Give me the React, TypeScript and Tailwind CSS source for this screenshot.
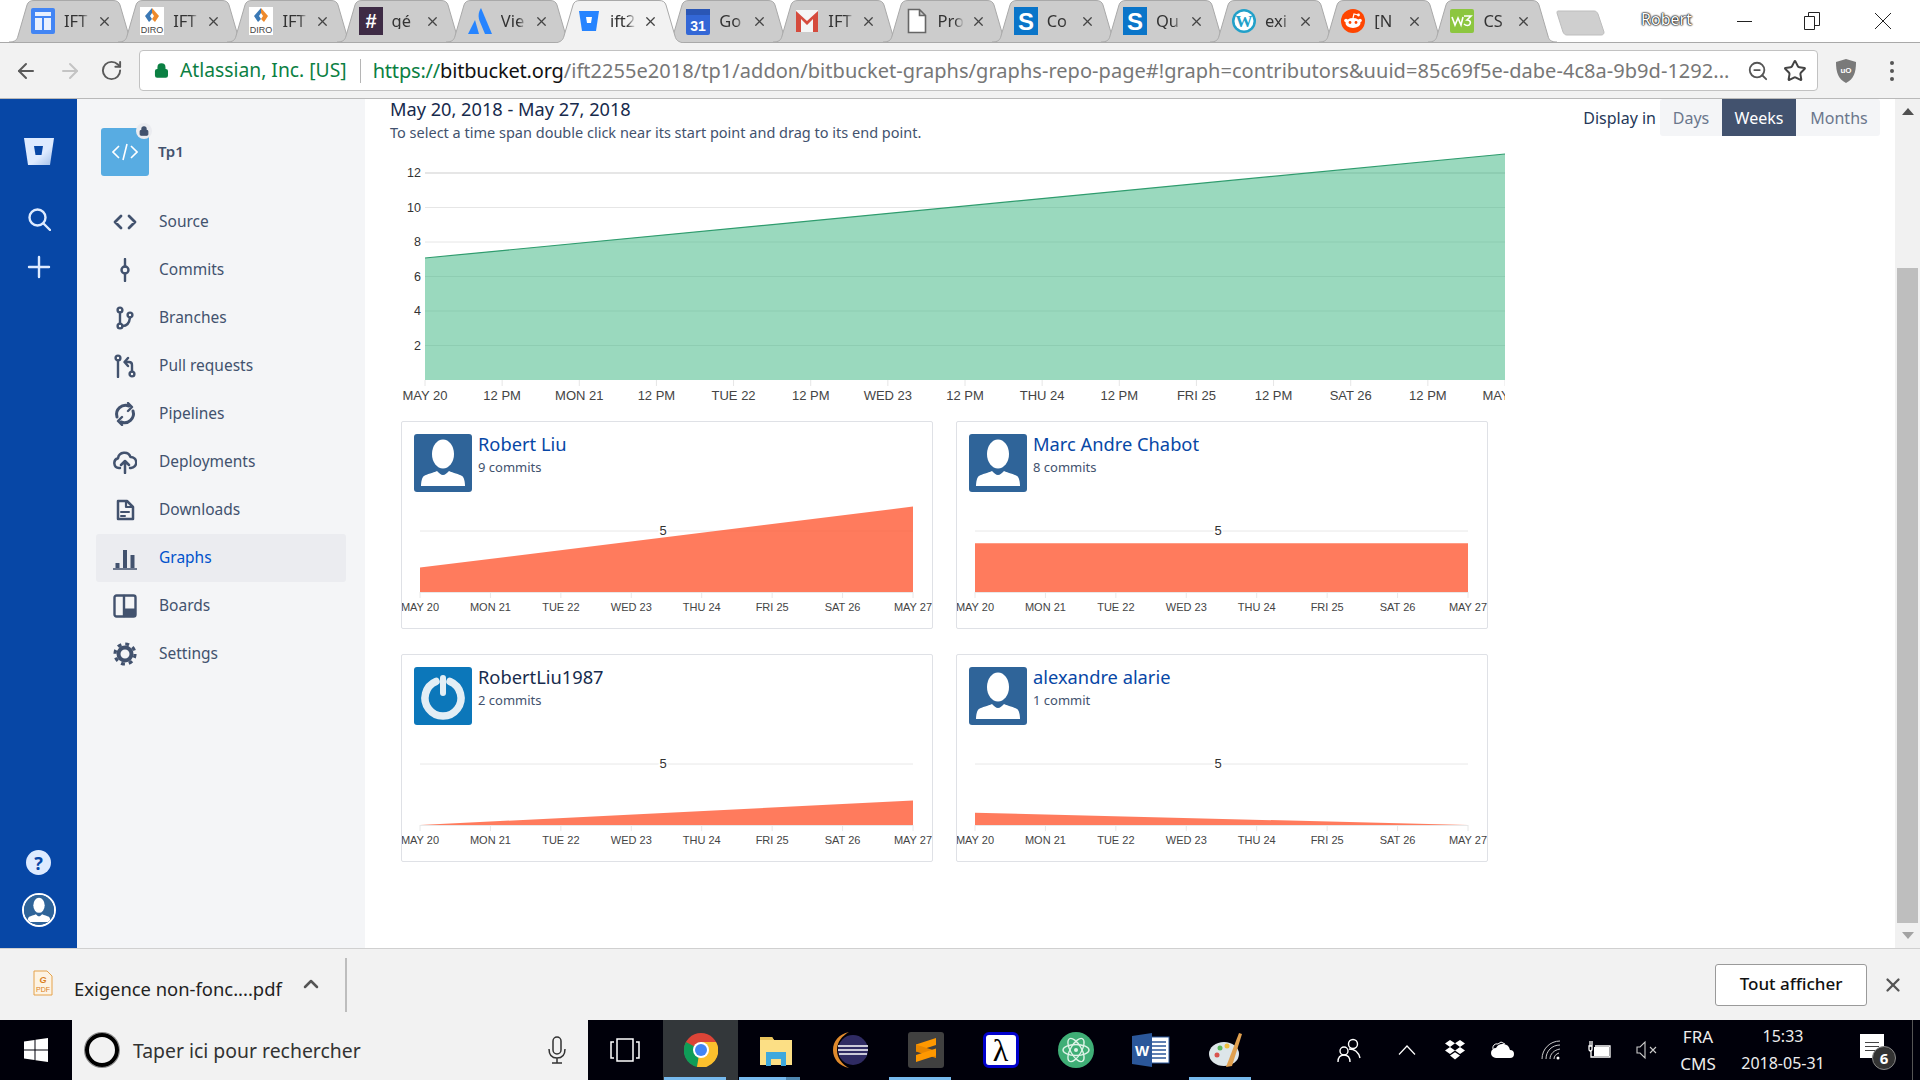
import type { ReactNode } from 'react';
import { ArrowLeft, ArrowRight, RotateCw, Lock, Star, ZoomOut, ChevronUp, X } from 'lucide-react';

const tabs: { text: string; icon: ReactNode; active?: boolean }[] = [
  { text: 'IFT', icon: <SitesIcon /> },
  { text: 'IFT', icon: <DiroIcon /> },
  { text: 'IFT', icon: <DiroIcon /> },
  { text: 'gé', icon: <SlackIcon /> },
  { text: 'Vie', icon: <AtlassianIcon /> },
  { text: 'ift2', icon: <BucketFavicon />, active: true },
  { text: 'Go', icon: <CalendarIcon /> },
  { text: 'IFT', icon: <GmailIcon /> },
  { text: 'Pro', icon: <DocIcon /> },
  { text: 'Co', icon: <StackIcon /> },
  { text: 'Qu', icon: <StackIcon /> },
  { text: 'exi', icon: <WordpressIcon /> },
  { text: '[N', icon: <RedditIcon /> },
  { text: 'CS', icon: <W3Icon /> },
];

function SitesIcon() {
  return (
    <svg width="24" height="26" viewBox="0 0 24 26">
      <rect width="24" height="26" rx="2" fill="#4285f4" />
      <path d="M4 4h16v4H4zM4 10h7v12H4zM13 10h7v12h-7z" fill="#e8f0fe" />
    </svg>
  );
}

function DiroIcon() {
  return (
    <svg width="24" height="28" viewBox="0 0 24 28">
      <rect width="24" height="28" fill="#fff" />
      <path d="M12 1 5 9l4 6 3-3-2-3 2-3z" fill="#3a78b5" />
      <path d="M12 1l7 8-4 6-3-3 2-3-2-3z" fill="#ee8a2c" />
      <text x="12" y="26" textAnchor="middle" fontSize="9" fontFamily="Liberation Sans" fill="#444">DIRO</text>
    </svg>
  );
}

function SlackIcon() {
  return (
    <svg width="24" height="28" viewBox="0 0 24 28">
      <rect width="24" height="28" fill="#3e2b45" />
      <text x="12" y="21" textAnchor="middle" fontSize="20" fontWeight="700" fontFamily="Liberation Sans" fill="#fff">#</text>
    </svg>
  );
}

function AtlassianIcon() {
  return (
    <svg width="24" height="26" viewBox="0 0 24 26">
      <path d="M13 0c-3 5-3 9-1 14l5 12h7z" fill="#2684ff" />
      <path d="M7 12 0 26h11z" fill="#2684ff" />
    </svg>
  );
}

function BucketFavicon() {
  return (
    <svg width="22" height="22" viewBox="0 0 22 22">
      <path d="M1 1h20l-3 20H4z" fill="#2684ff" />
      <path d="M8 7h6l-1 6H9z" fill="#fff" />
    </svg>
  );
}

function CalendarIcon() {
  return (
    <svg width="24" height="28" viewBox="0 0 24 28">
      <rect y="2" width="24" height="26" rx="2" fill="#3367d6" />
      <rect y="2" width="24" height="6" fill="#2a56b5" />
      <text x="12" y="24" textAnchor="middle" fontSize="14" fontFamily="Liberation Sans" fontWeight="700" fill="#fff">31</text>
    </svg>
  );
}

function GmailIcon() {
  return (
    <svg width="24" height="24" viewBox="0 0 24 24">
      <rect x="1" y="1" width="22" height="22" fill="#f5f5f5" />
      <path d="M1 23V2l11 10L23 2v21h-5V10l-6 6-6-6v13z" fill="#d54b3d" />
    </svg>
  );
}

function DocIcon() {
  return (
    <svg width="20" height="26" viewBox="0 0 20 26" className="mx-[2px]">
      <path d="M1.5 1.5h11l6 6v17h-17zM12.5 1.5v6h6" fill="#fff" stroke="#666" strokeWidth="1.6" />
    </svg>
  );
}

function StackIcon() {
  return (
    <svg width="24" height="28" viewBox="0 0 24 28">
      <rect width="24" height="28" fill="#0a75c9" />
      <text x="12" y="23" textAnchor="middle" fontSize="24" fontWeight="700" fontFamily="Liberation Sans" fill="#fff">S</text>
    </svg>
  );
}

function WordpressIcon() {
  return (
    <svg width="24" height="24" viewBox="0 0 24 24">
      <circle cx="12" cy="12" r="12" fill="#21a0c9" />
      <circle cx="12" cy="12" r="9.5" fill="#fff" />
      <text x="12" y="18" textAnchor="middle" fontSize="17" fontFamily="Liberation Serif" fontWeight="700" fill="#21a0c9">W</text>
    </svg>
  );
}

function RedditIcon() {
  return (
    <svg width="24" height="24" viewBox="0 0 24 24">
      <circle cx="12" cy="12" r="12" fill="#ff4500" />
      <ellipse cx="12" cy="14" rx="7.5" ry="5" fill="#fff" />
      <circle cx="5" cy="11.5" r="1.8" fill="#fff" />
      <circle cx="19" cy="11.5" r="1.8" fill="#fff" />
      <circle cx="9" cy="13.5" r="1.4" fill="#ff4500" />
      <circle cx="15" cy="13.5" r="1.4" fill="#ff4500" />
      <path d="M12 9l1-4 4 1" stroke="#fff" strokeWidth="1.2" fill="none" />
      <circle cx="17.5" cy="6" r="1.4" fill="#fff" />
    </svg>
  );
}

function W3Icon() {
  return (
    <svg width="24" height="24" viewBox="0 0 24 24">
      <rect width="24" height="24" rx="2" fill="#8cc63f" />
      <path d="M2 8l3 8 3-7 3 7 2-8M14 7h7l-4 4c3 0 4 2 3 4-1 2-4 2-6 0" fill="none" stroke="#fff" strokeWidth="1.6" />
    </svg>
  );
}

function Tab({ text, icon, active }: { text: string; icon: ReactNode; active?: boolean }) {
  return (
    <div className={`relative -mr-[20px] flex h-[43px] w-[129.2px] shrink-0 items-center pb-[1px] pl-[22px] ${active ? 'z-10' : ''}`}>
      <svg width="129" height="43" viewBox="0 0 129 43" className="absolute top-0 left-0">
        <path
          d={`M0 ${active ? 43 : 42} C6 42 8 40 9 36 L18 5 C19 2 21 .5 25 .5 L104 .5 C108 .5 110 2 111 5 L120 36 C121 40 123 42 129 ${active ? 43 : 42}`}
          fill={active ? '#f2f2f2' : '#cccccc'}
          stroke="#a9a9a9"
        />
      </svg>
      <div className="relative flex w-[24px] justify-center">{icon}</div>
      <span className="relative ml-[9px] w-[26px] overflow-hidden text-[16.5px] leading-none whitespace-nowrap text-[#333] [mask-image:linear-gradient(to_right,black_65%,transparent)]">
        {text}
      </span>
      <X size={15} strokeWidth={2} className="relative ml-[7px] text-[#444]" />
    </div>
  );
}

function TabBar() {
  return (
    <div className="relative flex h-[43px] shrink-0 items-start bg-white pl-[9px]">
      <div className="absolute right-0 bottom-0 left-0 h-px bg-[#a9a9a9]" />
      {tabs.map((t, i) => (
        <Tab key={i} {...t} />
      ))}
      <svg width="50" height="26" viewBox="0 0 50 26" className="relative mt-[10px] ml-[17px]">
        <path d="M3 1h36c2 0 3 1 4 3l6 18c0 2-1 3-3 3H12c-2 0-3-1-4-3L2 3c0-1 0-2 1-2z" fill="#cfcfcf" stroke="#bdbdbd" />
      </svg>
      <div className="flex-1" />
      <span className="mt-[9px] mr-[18px] text-[16px] leading-5 text-white [text-shadow:0_0_2px_#000,0_0_2px_#000,0_0_1px_#000]">Robert</span>
      <div className="flex h-[42px] w-[68px] items-center justify-center">
        <div className="h-px w-[15px] bg-[#222]" />
      </div>
      <div className="flex h-[42px] w-[68px] items-center justify-center">
        <svg width="16" height="18" viewBox="0 0 16 18" fill="none" stroke="#222">
          <path d="M.5 4.5h10v13H.5zM4.5 4.5v-4h11v13h-5" />
        </svg>
      </div>
      <div className="flex h-[42px] w-[74px] items-center justify-center">
        <svg width="18" height="18" viewBox="0 0 18 18" stroke="#222">
          <path d="M1 1l16 16M17 1 1 17" />
        </svg>
      </div>
    </div>
  );
}

function Toolbar() {
  return (
    <div className="flex h-[56px] shrink-0 items-center border-b border-[#b9b9b9] bg-[#f2f2f2]">
      <ArrowLeft size={24} strokeWidth={2} className="ml-[14px] text-[#5a5a5a]" />
      <ArrowRight size={24} strokeWidth={2} className="ml-[20px] text-[#c4c4c4]" />
      <RotateCw size={23} strokeWidth={2} className="ml-[18px] text-[#5a5a5a]" />
      <div className="ml-[16px] flex h-[41px] w-[1679px] items-center rounded-sm border border-[#c2c2c2] bg-white pr-[10px] pl-[14px]">
        <Lock size={15} strokeWidth={3} className="fill-[#0b8043] text-[#0b8043]" />
        <span className="ml-[11px] text-[19.3px] whitespace-nowrap text-[#0b8043]">Atlassian, Inc. [US]</span>
        <div className="ml-[13px] h-[24px] w-px bg-[#b5b5b5]" />
        <span className="ml-[12px] w-[1366px] overflow-hidden text-[20px] tracking-[0.04px] whitespace-nowrap text-[#777]">
          <span className="tracking-[-0.18px] text-[#0b8043]">https://</span>
          <span className="tracking-[-0.18px] text-[#111]">bitbucket.org</span>
          /ift2255e2018/tp1/addon/bitbucket-graphs/graphs-repo-page#!graph=contributors&amp;uuid=85c69f5e-dabe-4c8a-9b9d-1292...
        </span>
        <ZoomOut size={22} strokeWidth={2} className="ml-[14px] text-[#555]" />
        <Star size={24} strokeWidth={2} className="ml-[14px] text-[#444]" />
      </div>
      <svg width="22" height="26" viewBox="0 0 22 26" className="ml-[17px]">
        <path d="M11 1 21 4c0 10-2 17-10 21C3 21 1 14 1 4z" fill="#7a7a7a" />
        <text x="11" y="15" textAnchor="middle" fontSize="8" fontWeight="700" fontFamily="Liberation Sans" fill="#fff">uO</text>
      </svg>
      <div className="ml-[33px] flex flex-col gap-[4px]">
        <div className="size-[4px] rounded-full bg-[#555]" />
        <div className="size-[4px] rounded-full bg-[#555]" />
        <div className="size-[4px] rounded-full bg-[#555]" />
      </div>
    </div>
  );
}

function GlobalNav() {
  return (
    <div className="flex w-[77px] shrink-0 flex-col items-center bg-[#0747a6] pt-[39px] pb-[21px]">
      <svg width="30" height="27" viewBox="0 0 30 27">
        <defs>
          <linearGradient id="bk" x1="0.2" y1="0.2" x2="1" y2="1">
            <stop offset="0.5" stopColor="#deebff" />
            <stop offset="1" stopColor="#9fbde8" />
          </linearGradient>
        </defs>
        <path d="M0 0h30l-4 27H4z" fill="url(#bk)" />
        <path d="M10 8h9l-1.5 9h-6z" fill="#0747a6" />
      </svg>
      <svg width="24" height="24" viewBox="0 0 24 24" fill="none" stroke="#deebff" strokeWidth="2.4" className="mt-[42px]">
        <circle cx="10.5" cy="10.5" r="8" />
        <path d="M16.5 16.5 23 23" strokeLinecap="round" />
      </svg>
      <svg width="24" height="24" viewBox="0 0 24 24" stroke="#deebff" strokeWidth="2.4" strokeLinecap="round" className="mt-[24px]">
        <path d="M12 2v20M2 12h20" />
      </svg>
      <div className="flex-1" />
      <div className="flex size-[25px] items-center justify-center rounded-full bg-[#deebff] text-[18px] leading-none font-bold text-[#0747a6]">?</div>
      <div className="mt-[18px] size-[34px] overflow-hidden rounded-full border-[2px] border-white">
        <PersonAvatar />
      </div>
    </div>
  );
}

function PersonAvatar() {
  return (
    <svg viewBox="0 0 58 58" className="block size-full">
      <rect width="58" height="58" fill="#2f6499" />
      <ellipse cx="29" cy="20" rx="11" ry="14.5" fill="#fff" />
      <path d="M7 52c0-4 1-9 3-10 3-2 9-3 13-5 2 2 4 4 6 4s4-2 6-4c4 2 10 3 13 5 2 1 3 6 3 10z" fill="#fff" />
    </svg>
  );
}

const icons: Record<string, ReactNode> = {
  Source: <path d="M8 6l-6 6 6 6M16 6l6 6-6 6" strokeWidth="2.8" />,
  Commits: (
    <>
      <circle cx="12" cy="12" r="3.5" strokeWidth="2.4" />
      <path d="M12 1v7.5M12 15.5V23" strokeWidth="2.4" />
    </>
  ),
  Branches: (
    <>
      <circle cx="7" cy="4" r="2.4" strokeWidth="2.4" />
      <circle cx="7" cy="20" r="2.4" strokeWidth="2.4" />
      <circle cx="17" cy="9" r="2.4" strokeWidth="2.4" />
      <path d="M7 6.5v11M9.5 20c5 0 7-4 7.5-8.5" strokeWidth="2.4" />
    </>
  ),
  'Pull requests': (
    <>
      <circle cx="5" cy="4" r="2.4" strokeWidth="2.4" />
      <circle cx="19" cy="20" r="2.4" strokeWidth="2.4" />
      <path d="M5 6.5V23M19 17.5V11c0-2-1-3-3-3h-3M15 4l-3.5 4 3.5 4" strokeWidth="2.4" />
    </>
  ),
  Pipelines: (
    <>
      <path d="M4 15a9 9 0 0 1 12-11M20 9a9 9 0 0 1-12 11" strokeWidth="3" />
      <path d="M15 1l4 4-4 4M9 15l-4 4 4 4" strokeWidth="2.4" />
    </>
  ),
  Deployments: (
    <path d="M7 18H6a5 5 0 0 1-1-9.8A6.5 6.5 0 0 1 17.5 7 5.5 5.5 0 0 1 18 18h-1M12 23V12M8 15l4-4 4 4" strokeWidth="2.5" />
  ),
  Downloads: (
    <>
      <path d="M5 3h9l6 6v12H5z" strokeWidth="2.5" />
      <path d="M13 3v6h7" strokeWidth="2.2" />
      <path d="M8 14h8M8 18h4" strokeWidth="2" />
    </>
  ),
  Graphs: (
    <>
      <path d="M0 23h24" strokeWidth="1.4" />
      <path d="M2.5 22v-5h4v5zM10 22V4h4v18zM17.5 22V9h4v13z" fill="#42526e" stroke="none" />
    </>
  ),
  Boards: (
    <>
      <rect x="1.5" y="1.5" width="21" height="21" rx="2" strokeWidth="2.4" />
      <path d="M11 2v20" strokeWidth="2.4" />
      <path d="M11 15h11v7H11z" fill="#42526e" strokeWidth="1" />
    </>
  ),
  Settings: (
    <>
      <circle cx="12" cy="12" r="6.5" strokeWidth="4" />
      <circle cx="12" cy="12" r="10" strokeWidth="3.2" strokeDasharray="3.9 3.95" strokeLinecap="butt" />
    </>
  ),
};

const navItems = ['Source', 'Commits', 'Branches', 'Pull requests', 'Pipelines', 'Deployments', 'Downloads', 'Graphs', 'Boards', 'Settings'];

function SideNav() {
  return (
    <div className="w-[288px] shrink-0 bg-[#f4f5f7] px-[19px] pt-[29px] text-[#42526e]">
      <div className="flex items-center pl-[5px]">
        <div className="relative flex size-[48px] items-center justify-center rounded-[3px] bg-[#58ace2]">
          <svg width="26" height="20" viewBox="0 0 26 20" fill="none" stroke="#fff" strokeWidth="1.6">
            <path d="M7 4l-6 6 6 6M19 4l6 6-6 6M15 2l-4 16" />
          </svg>
          <div className="absolute -top-[5px] -right-[3px] flex size-[16px] items-center justify-center rounded-full bg-[#ebecf0]">
            <Lock size={10} strokeWidth={3} className="fill-[#42526e] text-[#42526e]" />
          </div>
        </div>
        <span className="mb-[2px] ml-[9px] text-[15px] font-semibold">Tp1</span>
      </div>
      <div className="mt-[22px] flex flex-col">
        {navItems.map((item) => (
          <div key={item} className={`flex h-[48px] items-center rounded-[3px] pl-[17px] ${item === 'Graphs' ? 'bg-[#ebecf0] text-[#0052cc]' : ''}`}>
            <svg width="24" height="24" viewBox="0 0 24 24" fill="none" stroke="#42526e" strokeLinecap="round" strokeLinejoin="round">
              {icons[item]}
            </svg>
            <span className="ml-[22px] text-[15.5px]">{item}</span>
          </div>
        ))}
      </div>
    </div>
  );
}

const hourLabels = ['MAY 20', '12 PM', 'MON 21', '12 PM', 'TUE 22', '12 PM', 'WED 23', '12 PM', 'THU 24', '12 PM', 'FRI 25', '12 PM', 'SAT 26', '12 PM', 'MAY 27'];

function MainChart() {
  const x0 = 425;
  const step = 1080 / 14;
  return (
    <svg width="1125" height="266" viewBox="385 144 1125 266" className="-ml-[5px] block shrink-0 font-['Liberation_Sans']">
      <defs>
        <clipPath id="clipChart">
          <rect x="385" y="144" width="1120" height="266" />
        </clipPath>
      </defs>
      {[12, 10, 8, 6, 4, 2].map((v, i) => {
        const y = 173 + i * 34.5;
        return (
          <g key={v}>
            <line x1="425" x2="1505" y1={y} y2={y} stroke="#e6e6e6" strokeWidth={i === 0 ? 2 : 1} />
            <text x="421" y={y + 4} textAnchor="end" fontSize="12.5" fill="#333">{v}</text>
          </g>
        );
      })}
      <path d="M425 258 L1505 154 V380 H425Z" fill="#36b37e" fillOpacity="0.5" />
      <path d="M425 258 L1505 154" stroke="#2f9c6e" strokeWidth="1.2" fill="none" />
      <g clipPath="url(#clipChart)">
        {hourLabels.map((l, i) => (
          <g key={i}>
            <line x1={x0 + i * step} x2={x0 + i * step} y1="380" y2="386" stroke="#e6e6e6" />
            <text x={x0 + i * step} y="400" textAnchor="middle" fontSize="13" fill="#444">{l}</text>
          </g>
        ))}
      </g>
    </svg>
  );
}

const dayLabels = ['MAY 20', 'MON 21', 'TUE 22', 'WED 23', 'THU 24', 'FRI 25', 'SAT 26', 'MAY 27'];

function MiniChart({ from, to }: { from: number; to: number }) {
  // 5 commits = 61px of height
  const unit = 12.2;
  return (
    <svg width="530" height="118" viewBox="0 82 530 118" className="block font-['Liberation_Sans']">
      <line x1="18" x2="511" y1="109" y2="109" stroke="#e8e8e8" />
      <text x="261" y="113" textAnchor="middle" fontSize="13" fill="#333" stroke="#fff" strokeWidth="3" paintOrder="stroke">5</text>
      <path d={`M18 ${170 - from * unit} L511 ${170 - to * unit} V170 H18Z`} fill="#ff5630" fillOpacity="0.78" />
      <line x1="18" x2="511" y1="170.5" y2="170.5" stroke="#e8e8e8" />
      {dayLabels.map((l, i) => {
        const x = 18 + (i * 493) / 7;
        return (
          <g key={i}>
            <line x1={x} x2={x} y1="170" y2="176" stroke="#e8e8e8" />
            <text x={x} y="189" textAnchor="middle" fontSize="11" fill="#444">{l}</text>
          </g>
        );
      })}
    </svg>
  );
}

function PowerAvatar() {
  return (
    <svg viewBox="0 0 58 58" className="block size-full">
      <rect width="58" height="58" fill="#0c77ba" />
      <g className="blur-[0.6px]" fill="none" stroke="#e3eef5" strokeLinecap="round">
        <path d="M22 14.5a18 18 0 1 0 14 0" strokeWidth="7.5" />
        <path d="M29 11v15" strokeWidth="6" />
      </g>
    </svg>
  );
}

const contributors = [
  { name: 'Robert Liu', commits: '9 commits', from: 2, to: 7, link: true, power: false },
  { name: 'Marc Andre Chabot', commits: '8 commits', from: 4, to: 4, link: true, power: false },
  { name: 'RobertLiu1987', commits: '2 commits', from: 0, to: 2, link: false, power: true },
  { name: 'alexandre alarie', commits: '1 commit', from: 1, to: 0, link: true, power: false },
];

function ContributorCard({ name, commits, from, to, link, power }: (typeof contributors)[number]) {
  return (
    <div className="h-[208px] w-[532px] rounded-[2px] border border-[#dfe1e6] bg-white">
      <div className="flex h-[82px] pt-[12px] pl-[12px]">
        <div className="size-[58px] overflow-hidden rounded-[3px]">{power ? <PowerAvatar /> : <PersonAvatar />}</div>
        <div className="-mt-[1px] ml-[6px]">
          <div className={`text-[18.3px] leading-[22px] ${link ? 'text-[#0747a6]' : 'text-[#172b4d]'}`}>{name}</div>
          <div className="mt-[2px] text-[13px] leading-[20px] text-[#42526e]">{commits}</div>
        </div>
      </div>
      <MiniChart from={from} to={to} />
    </div>
  );
}

function Main() {
  return (
    <div className="flex min-w-0 flex-1 flex-col pl-[25px]">
      <div className="flex h-[45px] shrink-0 items-start justify-between pr-[15px]">
        <div className="-mt-[1px]">
          <h2 className="text-[18.2px] leading-[22px] text-[#172b4d]">May 20, 2018 - May 27, 2018</h2>
          <p className="mt-[2px] text-[14.5px] leading-[20px] text-[#42526e]">
            To select a time span double click near its start point and drag to its end point.
          </p>
        </div>
        <div className="flex h-[37px] items-center text-[16px]">
          <span className="mr-[4px] text-[#253858]">Display in</span>
          <div className="flex h-full w-[62px] items-center justify-center rounded-l-[3px] bg-[#f4f5f7] px-[12px] text-[#6b778c]">Days</div>
          <div className="flex h-full w-[74px] items-center justify-center bg-[#42526e] text-white">Weeks</div>
          <div className="flex h-full w-[84px] items-center justify-center rounded-r-[3px] bg-[#f4f5f7] pl-[2px] text-[#6b778c]">Months</div>
        </div>
      </div>
      <MainChart />
      <div className="mt-[11px] ml-[11px] grid grid-cols-[532px_532px] gap-x-[23px] gap-y-[25px]">
        {contributors.map((c) => (
          <ContributorCard key={c.name} {...c} />
        ))}
      </div>
    </div>
  );
}

function Scrollbar() {
  return (
    <div className="flex w-[25px] shrink-0 flex-col items-center bg-[#f1f1f1]">
      <div className="mt-[9px] h-0 w-0 border-x-[6px] border-b-[7px] border-x-transparent border-b-[#505050]" />
      <div className="mt-[153px] h-[655px] w-[21px] bg-[#bebebe]" />
      <div className="mt-[9px] h-0 w-0 border-x-[6px] border-t-[7px] border-x-transparent border-t-[#a3a3a3]" />
    </div>
  );
}

function DownloadBar() {
  return (
    <div className="flex h-[72px] shrink-0 items-center border-t border-[#d0d0d0] bg-[#f2f2f2] pl-[33px] text-[#222]">
      <svg width="20" height="26" viewBox="0 0 20 26" className="-mt-[4px]">
        <path d="M1 1h13l5 5v19H1z" fill="#fdf3e3" stroke="#e5a24a" />
        <text x="10" y="13" textAnchor="middle" fontSize="9" fontWeight="700" fontStyle="italic" fontFamily="Liberation Sans" fill="#d97d1c">G</text>
        <text x="10" y="22" textAnchor="middle" fontSize="7" fontFamily="Liberation Sans" fill="#d97d1c">PDF</text>
      </svg>
      <span className="mt-[9px] ml-[21px] text-[18.4px] whitespace-nowrap">Exigence non-fonc....pdf</span>
      <ChevronUp size={24} strokeWidth={2.5} className="-mt-[1px] ml-[17px] text-[#555]" />
      <div className="ml-[22px] h-[54px] w-[2px] bg-[#bdbdbd]" />
      <div className="flex-1" />
      <div className="flex h-[42px] w-[152px] items-center justify-center rounded-[3px] border border-[#9a9a9a] bg-white pb-[1px] text-[17px] font-medium text-[#111]">
        Tout afficher
      </div>
      <X size={22} strokeWidth={2.5} className="mr-[16px] ml-[15px] text-[#555]" />
    </div>
  );
}

function TaskApp({ children, active, line, extra }: { children: ReactNode; active?: boolean; line?: boolean; extra?: boolean }) {
  return (
    <div className={`relative flex h-full w-[75px] shrink-0 items-center justify-center ${active ? 'bg-[#33373a]' : ''}`}>
      {children}
      {line && <div className={`absolute bottom-0 left-[1px] h-[3px] bg-[#76b9ed] ${extra ? 'w-[47px]' : 'w-[62px]'}`} />}
      {extra && <div className="absolute bottom-0 left-[48px] h-[3px] w-[14px] bg-[#4f87b0]" />}
    </div>
  );
}

function Taskbar() {
  return (
    <div className="flex h-[60px] shrink-0 items-center bg-[#00000a] text-white">
      <div className="flex h-full w-[72px] items-center justify-center">
        <svg width="24" height="24" viewBox="0 0 24 24" fill="#fff">
          <path d="M0 3.5 10.5 2v9.5H0zM11.5 1.8 24 0v11.5H11.5zM0 12.5h10.5V22L0 20.5zM11.5 12.5H24V24l-12.5-1.8z" />
        </svg>
      </div>
      <div className="flex h-full w-[516px] items-center bg-[#f2f2f2] pr-[22px] pl-[13px] text-[#333]">
        <div className="size-[34px] rounded-full border-[4px] border-black shadow-[0_0_0_1px_#888]" />
        <span className="mt-[2px] ml-[14px] text-[19.4px]">Taper ici pour rechercher</span>
        <svg width="18" height="28" viewBox="0 0 18 28" fill="none" stroke="#333" strokeWidth="1.5" className="ml-auto">
          <rect x="5" y="1" width="8" height="17" rx="4" />
          <path d="M1 13c0 6 3 9 8 9s8-3 8-9M9 22v5M4 27h10" />
        </svg>
      </div>
      <div className="flex h-full w-[75px] items-center justify-center pr-[2px]">
        <svg width="30" height="24" viewBox="0 0 30 24" fill="none" stroke="#fff" strokeWidth="1.5">
          <path d="M7 1h16v22H7zM4 4H1v16h3M26 4h3v16h-3" />
        </svg>
      </div>
      <TaskApp active line>
        <svg width="34" height="34" viewBox="0 0 34 34">
          <circle cx="17" cy="17" r="17" fill="#db4437" />
          <path d="M17 17 2 9a17 17 0 0 0 11 25z" fill="#0f9d58" />
          <path d="M17 9h15a17 17 0 0 1-19 25z" fill="#fbc02d" />
          <circle cx="17" cy="17" r="8" fill="#fff" />
          <circle cx="17" cy="17" r="6" fill="#4285f4" />
        </svg>
      </TaskApp>
      <TaskApp line extra>
        <svg width="32" height="32" viewBox="0 0 32 32">
          <path d="M0 3h12l2 3h18v25H0z" fill="#fcdf85" />
          <path d="M0 3h12l2 3H0z" fill="#e8c35c" />
          <path d="M6 32V18h20v14h-5v-7H11v7z" fill="#3fa9dd" />
        </svg>
      </TaskApp>
      <TaskApp>
        <svg width="36" height="38" viewBox="0 0 36 38">
          <path d="M16 1C6 3 0 10 0 19s6 16 16 18C9 33 4 27 4 19S9 5 16 1z" fill="#e08a2c" />
          <circle cx="20" cy="19" r="15" fill="#2f2b63" />
          <path d="M5 15h30M5 19h30M6 23h28" stroke="#fff" strokeWidth="1.6" />
        </svg>
      </TaskApp>
      <TaskApp line>
        <svg width="36" height="36" viewBox="0 0 36 36">
          <rect width="36" height="36" rx="3" fill="#404040" />
          <path d="M28 6 8 12.5v7L28 13z" fill="#ff9800" />
          <path d="M8 12.5 28 19v7L8 19.5z" fill="#e88600" />
          <path d="M28 16.5 8 23v7l20-6.5z" fill="#ff9800" />
        </svg>
      </TaskApp>
      <TaskApp>
        <div className="flex size-[36px] items-center justify-center rounded-[6px] border-[3px] border-[#0000cc] bg-white font-['Liberation_Serif'] text-[32px] leading-none text-black">λ</div>
      </TaskApp>
      <TaskApp>
        <svg width="36" height="36" viewBox="0 0 36 36" fill="none">
          <circle cx="18" cy="18" r="18" fill="#3fae76" />
          <g stroke="#dff3e8" strokeWidth="1.4">
            <ellipse cx="18" cy="18" rx="13" ry="5.5" />
            <ellipse cx="18" cy="18" rx="13" ry="5.5" transform="rotate(60 18 18)" />
            <ellipse cx="18" cy="18" rx="13" ry="5.5" transform="rotate(120 18 18)" />
          </g>
          <circle cx="18" cy="18" r="2" fill="#dff3e8" />
        </svg>
      </TaskApp>
      <TaskApp>
        <svg width="38" height="34" viewBox="0 0 38 34">
          <rect x="14" y="4" width="23" height="26" fill="#fff" stroke="#2b579a" />
          <path d="M19 9h15M19 13h15M19 17h15M19 21h15M19 25h15" stroke="#2b579a" strokeWidth="1.5" />
          <path d="M0 3 20 0v34L0 31z" fill="#2b579a" />
          <text x="10" y="23" textAnchor="middle" fontSize="15" fontWeight="700" fontFamily="Liberation Sans" fill="#fff">W</text>
        </svg>
      </TaskApp>
      <TaskApp line>
        <svg width="34" height="38" viewBox="0 0 34 38">
          <ellipse cx="15" cy="23" rx="15" ry="12" fill="#dde6ea" />
          <circle cx="8" cy="24" r="2.5" fill="#d9534f" />
          <circle cx="11" cy="17" r="2.5" fill="#5cb85c" />
          <circle cx="18" cy="15" r="2.5" fill="#f0c040" />
          <path d="M17 36 30 2l3 1-10 32z" fill="#e0a050" />
        </svg>
      </TaskApp>
      <div className="flex-1" />
      <TrayIcon width="w-[69px]">
        <svg width="24" height="26" viewBox="0 0 24 26" fill="none" stroke="#fff" strokeWidth="1.4">
          <circle cx="16" cy="7" r="4.5" />
          <circle cx="7" cy="14" r="4" />
          <path d="M1 25c0-5 2-7 6-7s6 2 6 7M12 12c4 0 9 1 11 9" />
        </svg>
      </TrayIcon>
      <TrayIcon>
        <svg width="18" height="10" viewBox="0 0 18 10" fill="none" stroke="#fff" strokeWidth="1.2">
          <path d="M1 9.5 9 1l8 8.5" />
        </svg>
      </TrayIcon>
      <TrayIcon>
        <svg width="22" height="22" viewBox="0 0 22 22" fill="#fff">
          <path d="M6 1l5 3.3L6 8 1 4.5zM16 1l5 3.5L16 8l-5-3.7zM6 8l5 3.5L6 15l-5-3.5zM16 8l5 3.5L16 15l-5-3.5zM6 16.5l5-3.3 5 3.3-5 4z" />
        </svg>
      </TrayIcon>
      <TrayIcon>
        <svg width="26" height="18" viewBox="0 0 26 18" fill="#fff">
          <path d="M6 17a5 5 0 0 1 0-10 7.5 7.5 0 0 1 14 2 4 4 0 0 1 0 8z" />
          <path d="M3 8a4 4 0 0 1 5-5l3-2 4 2" stroke="#fff" fill="none" />
        </svg>
      </TrayIcon>
      <TrayIcon>
        <svg width="20" height="20" viewBox="0 0 20 20" fill="none" stroke="#ccc" strokeWidth="1">
          <path d="M1 19C1 9 9 1 19 1M5 19C5 11 11 5 19 5M9 19c0-5 4-9 10-10M13 19c0-3 2-5 5-6" />
          <circle cx="17" cy="18" r="1.5" fill="#fff" stroke="none" />
        </svg>
      </TrayIcon>
      <TrayIcon>
        <svg width="24" height="20" viewBox="0 0 24 20" fill="none" stroke="#fff" strokeWidth="1.3">
          <path d="M2 6h3v3a2 2 0 0 1-2 2 2 2 0 0 1-1-2zM3 1v5M5 1v5M4 11v6h19V6H8" />
          <rect x="7" y="7" width="15" height="9" fill="#fff" stroke="none" />
        </svg>
      </TrayIcon>
      <TrayIcon>
        <svg width="22" height="20" viewBox="0 0 22 20" fill="none" stroke="#ccc" strokeWidth="1.1">
          <path d="M1 7h3l5-5v16l-5-5H1zM14 7l6 6M20 7l-6 6" />
        </svg>
      </TrayIcon>
      <div className="flex h-full w-[54px] flex-col items-center justify-center text-[17px] leading-[27px] text-[#eee]">
        <span>FRA</span>
        <span>CMS</span>
      </div>
      <div className="flex h-full w-[116px] flex-col items-center justify-center text-[16px] leading-[27px] text-[#eee]">
        <span>15:33</span>
        <span>2018-05-31</span>
      </div>
      <div className="flex h-full w-[62px] items-center justify-center">
        <div className="relative -mt-[8px] flex h-[24px] w-[24px] flex-col justify-center gap-[3px] bg-white px-[5px]">
          <div className="h-px bg-[#444]" />
          <div className="h-px bg-[#444]" />
          <div className="h-px bg-[#444]" />
          <div className="absolute -right-[12px] -bottom-[12px] flex size-[24px] items-center justify-center rounded-full border border-[#888] bg-[#333] text-[15px] font-bold text-white">6</div>
        </div>
      </div>
      <div className="ml-[9px] h-full w-px bg-[#555]" />
      <div className="w-[7px]" />
    </div>
  );
}

function TrayIcon({ children, width = 'w-[48px]' }: { children: ReactNode; width?: string }) {
  return <div className={`flex h-full shrink-0 items-center justify-center ${width}`}>{children}</div>;
}

export default function App() {
  return (
    <div className="flex h-screen w-screen flex-col overflow-hidden bg-white font-['Noto_Sans',sans-serif]">
      <TabBar />
      <Toolbar />
      <div className="flex min-h-0 flex-1">
        <GlobalNav />
        <SideNav />
        <Main />
        <Scrollbar />
      </div>
      <DownloadBar />
      <Taskbar />
    </div>
  );
}
